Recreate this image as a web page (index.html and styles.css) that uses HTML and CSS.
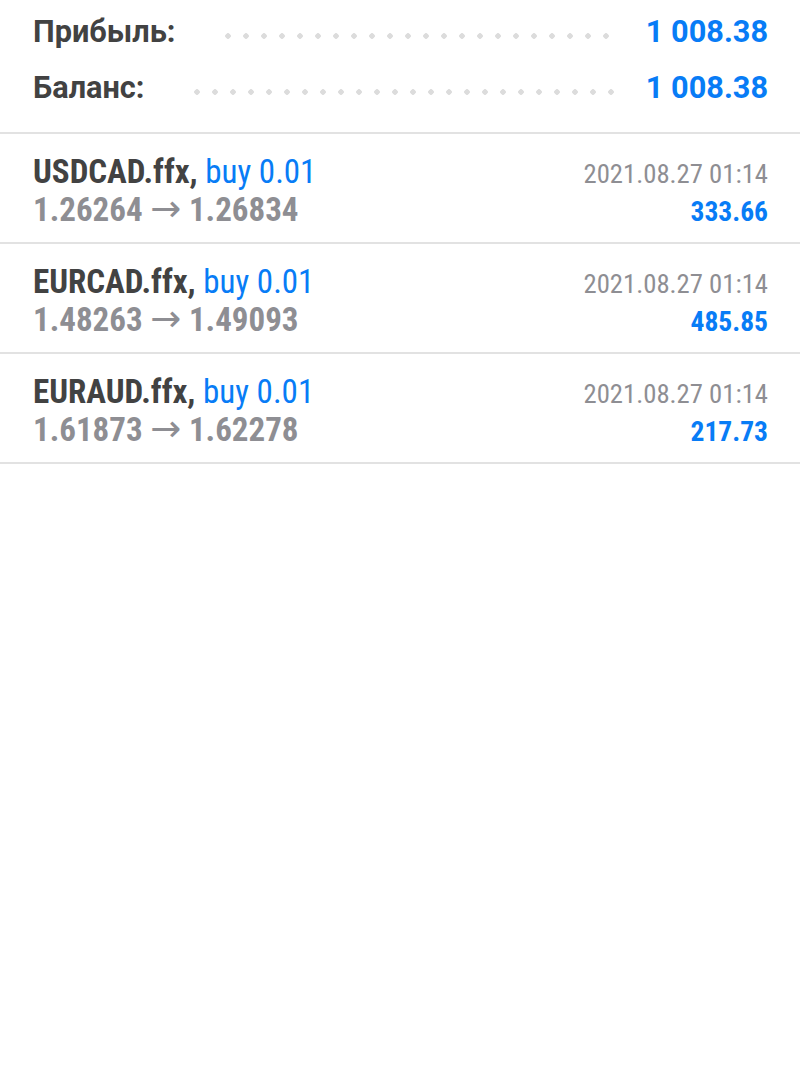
FILE: index.html
```html
<!DOCTYPE html>
<html lang="ru">

<head>
    <meta charset="UTF-8">
    <meta name="viewport" content="width=device-width, initial-scale=1.0">
    <title>История</title>
    <link rel="stylesheet" href="styles.css">
</head>

<body>
    <div class="summary">
        <div class="summary-row">
            <span class="summary-label">Прибыль:</span>
            <span class="dots"></span>
            <span class="summary-value">1 008.38</span>
        </div>
        <div class="summary-row">
            <span class="summary-label">Баланс:</span>
            <span class="dots"></span>
            <span class="summary-value">1 008.38</span>
        </div>
    </div>

    <div class="deals">
        <div class="deal">
            <div class="deal-title">USDCAD.ffx, <span class="deal-type">buy 0.01</span></div>
            <div class="deal-time">2021.08.27 01:14</div>
            <div class="deal-prices">1.26264 <span class="arrow">→</span> 1.26834</div>
            <div class="deal-profit">333.66</div>
        </div>
        <div class="deal">
            <div class="deal-title">EURCAD.ffx, <span class="deal-type">buy 0.01</span></div>
            <div class="deal-time">2021.08.27 01:14</div>
            <div class="deal-prices">1.48263 <span class="arrow">→</span> 1.49093</div>
            <div class="deal-profit">485.85</div>
        </div>
        <div class="deal">
            <div class="deal-title">EURAUD.ffx, <span class="deal-type">buy 0.01</span></div>
            <div class="deal-time">2021.08.27 01:14</div>
            <div class="deal-prices">1.61873 <span class="arrow">→</span> 1.62278</div>
            <div class="deal-profit">217.73</div>
        </div>
    </div>
</body>

</html>
```

FILE: styles.css
```css
body {
    margin: 0;
    background: #fff;
    font-family: Roboto, "Noto Sans", sans-serif;
    color: #424242;
}

.summary {
    padding: 4px 32px 16px 33px;
    border-bottom: 2px solid #e2e2e2;
}

.summary-row {
    display: flex;
    align-items: center;
    height: 56px;
    font-size: 30.7px;
    font-weight: 700;
    line-height: 56px;
}

.summary-label {
    color: #424242;
}

.summary-value {
    color: #087cf6;
}

.dots {
    flex: 1;
    height: 6px;
    margin: 8px 30px 0 44px;
    background-image: radial-gradient(circle, #dcdcdc 2.5px, transparent 3px);
    background-size: 18px 6px;
    background-repeat: repeat-x;
}

.deal {
    display: grid;
    grid-template-columns: 1fr auto;
    align-items: baseline;
    padding: 20px 32px 13px 33px;
    border-bottom: 2px solid #e2e2e2;
    font-family: "Roboto Condensed", "Liberation Sans Narrow", Roboto, sans-serif;
    line-height: 35px;
}

.deal-title {
    font-size: 33px;
    font-weight: 700;
    color: #424242;
}

.deal-type {
    font-weight: 400;
    color: #087cf6;
}

.deal-prices {
    font-size: 33px;
    font-weight: 700;
    color: #8e8e93;
}

.arrow {
    font-family: "DejaVu Sans", sans-serif;
    font-weight: 400;
    font-size: 37px;
    line-height: 0;
}

.deal-time {
    text-align: right;
    font-size: 26.7px;
    color: #8e8e93;
}

.deal-profit {
    text-align: right;
    font-size: 27.5px;
    font-weight: 700;
    color: #087cf6;
}
```
